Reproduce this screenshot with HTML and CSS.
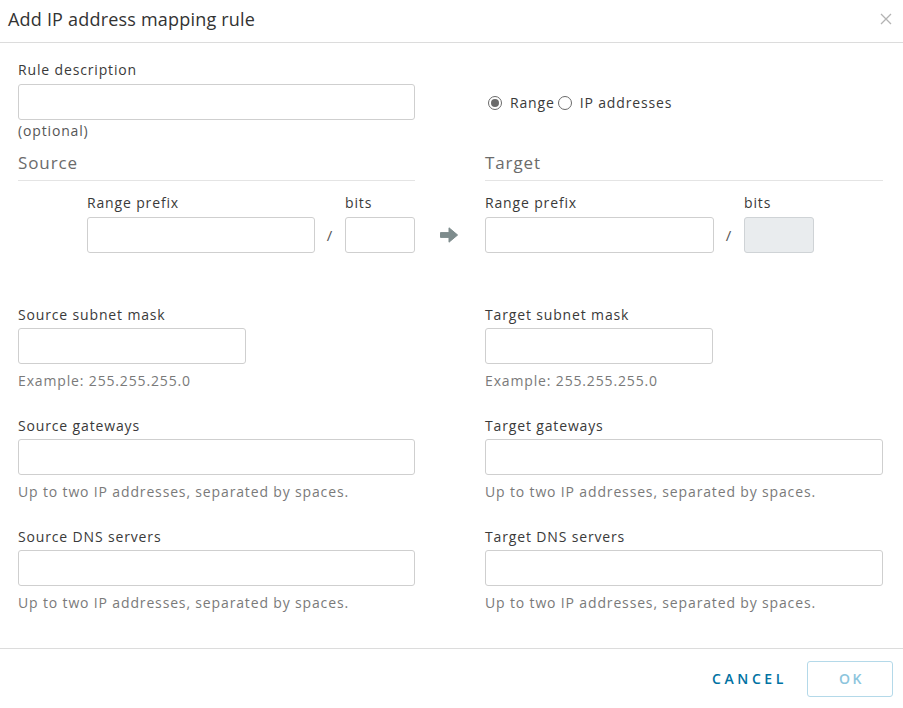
FILE: index.html
```html
<!DOCTYPE html>
<html lang="en">
<head>
<meta charset="utf-8">
<title>Add IP address mapping rule</title>
<link rel="stylesheet" href="styles.css">
</head>
<body>
<div class="modal">
  <div class="modal-header">
    <h3 class="modal-title">Add IP address mapping rule</h3>
    <button class="close" aria-label="Close">
      <svg width="12" height="12" viewBox="0 0 12 12"><path d="M1 1 L11 11 M11 1 L1 11" stroke="#b3b3b3" stroke-width="1.3" fill="none"/></svg>
    </button>
  </div>
  <div class="modal-body">
    <div class="grid">
      <div class="cell-left">
        <label class="label">Rule description</label>
        <input class="input input-full" type="text">
        <div class="optional">(optional)</div>
      </div>
      <div class="cell-mid"></div>
      <div class="cell-right">
        <div class="radios">
          <span class="radio checked"></span><span class="radio-label">Range</span>
          <span class="radio"></span><span class="radio-label gap">IP addresses</span>
        </div>
      </div>

      <div class="cell-left"><h4 class="section">Source</h4></div>
      <div class="cell-mid"></div>
      <div class="cell-right"><h4 class="section">Target</h4></div>

      <div class="cell-left">
        <div class="range range-indent">
          <div class="range-prefix">
            <label class="label">Range prefix</label>
            <input class="input" type="text">
          </div>
          <span class="slash">/</span>
          <div class="range-bits">
            <label class="label">bits</label>
            <input class="input" type="text">
          </div>
        </div>
      </div>
      <div class="cell-mid arrow-cell">
        <svg width="20" height="18" viewBox="0 0 20 18"><path d="M1.5 6.6 H10 V1.8 L18.6 9 L10 16.2 V11.4 H1.5 Z" fill="#7e8c8d" stroke="#7e8c8d" stroke-width="1" stroke-linejoin="round"/></svg>
      </div>
      <div class="cell-right">
        <div class="range">
          <div class="range-prefix wide">
            <label class="label">Range prefix</label>
            <input class="input" type="text">
          </div>
          <span class="slash">/</span>
          <div class="range-bits">
            <label class="label">bits</label>
            <input class="input" type="text" disabled>
          </div>
        </div>
      </div>

      <div class="cell-left group first">
        <label class="label">Source subnet mask</label>
        <input class="input input-half" type="text">
        <div class="helper">Example: 255.255.255.0</div>
      </div>
      <div class="cell-mid"></div>
      <div class="cell-right group first">
        <label class="label">Target subnet mask</label>
        <input class="input input-half" type="text">
        <div class="helper">Example: 255.255.255.0</div>
      </div>

      <div class="cell-left group">
        <label class="label">Source gateways</label>
        <input class="input input-full" type="text">
        <div class="helper">Up to two IP addresses, separated by spaces.</div>
      </div>
      <div class="cell-mid"></div>
      <div class="cell-right group">
        <label class="label">Target gateways</label>
        <input class="input input-full" type="text">
        <div class="helper">Up to two IP addresses, separated by spaces.</div>
      </div>

      <div class="cell-left group">
        <label class="label">Source DNS servers</label>
        <input class="input input-full" type="text">
        <div class="helper">Up to two IP addresses, separated by spaces.</div>
      </div>
      <div class="cell-mid"></div>
      <div class="cell-right group">
        <label class="label">Target DNS servers</label>
        <input class="input input-full" type="text">
        <div class="helper">Up to two IP addresses, separated by spaces.</div>
      </div>
    </div>
  </div>
  <div class="modal-footer">
    <button class="btn btn-link">CANCEL</button>
    <button class="btn btn-outline" disabled>OK</button>
  </div>
</div>
</body>
</html>
```
FILE: styles.css
```css
* { box-sizing: border-box; }
html, body { margin: 0; padding: 0; background: #fff; }
body {
  font-family: "Open Sans", "Liberation Sans", sans-serif;
  color: #313131;
  width: 903px;
  height: 708px;
  overflow: hidden;
  letter-spacing: 0.85px;
}
.modal {
  width: 903px;
  height: 708px;
  display: flex;
  flex-direction: column;
  background: #fff;
}
.modal-header {
  height: 43px;
  border-bottom: 1px solid #dcdcdc;
  display: flex;
  align-items: center;
  justify-content: space-between;
  padding: 0 10px 4px 8px;
}
.modal-title {
  margin: 0;
  font-size: 18px;
  font-weight: 400;
  color: #333;
  letter-spacing: 0.2px;
}
.close {
  border: 0;
  background: none;
  padding: 0;
  width: 14px;
  height: 14px;
  display: flex;
  align-items: center;
  justify-content: center;
}
.modal-body {
  flex: 1;
  padding: 17px 20px 0 18px;
}
.grid {
  display: grid;
  grid-template-columns: 397px 70px 398px;
}
.label {
  display: block;
  font-size: 14px;
  line-height: 20px;
  color: #3a3a3a;
}
.input {
  display: block;
  height: 36px;
  margin-top: 4px;
  border: 1px solid #cfcfcf;
  border-radius: 3px;
  background: #fff;
  font: inherit;
  padding: 0 8px;
  outline: none;
}
.input:disabled { background: #e9ecee; border-color: #cfd3d6; }
.input-full { width: 100%; }
.input-half { width: 228px; }
.optional {
  font-size: 14px;
  line-height: 20px;
  margin-top: 1px;
  color: #565656;
}
.radios {
  display: flex;
  align-items: center;
  margin-top: 33px;
  padding-left: 3px;
  height: 20px;
}
.radio {
  width: 14px;
  height: 14px;
  border: 1px solid #6a6a6a;
  border-radius: 50%;
  position: relative;
  flex: none;
}
.radio.checked::after {
  content: "";
  position: absolute;
  left: 2px;
  top: 2px;
  width: 8px;
  height: 8px;
  border-radius: 50%;
  background: #6a6a6a;
}
.radio-label {
  font-size: 14px;
  line-height: 20px;
  margin-left: 8px;
  margin-right: 3px;
  color: #3a3a3a;
}
.section {
  margin: 9px 0 0 0;
  font-size: 17px;
  font-weight: 400;
  line-height: 26px;
  color: #6b6b6b;
  padding-bottom: 4px;
  border-bottom: 1px solid #e4e4e4;
  letter-spacing: 0.9px;
}
.range {
  display: flex;
  align-items: flex-end;
  margin-top: 12px;
}
.range-indent { padding-left: 69px; }
.range-prefix { width: 228px; }
.range-prefix.wide { width: 229px; }
.range-prefix .input, .range-bits .input { width: 100%; }
.slash {
  width: 30px;
  text-align: center;
  font-size: 15px;
  line-height: 36px;
  color: #565656;
}
.range-bits { width: 70px; }
.arrow-cell {
  display: flex;
  justify-content: center;
  align-items: flex-end;
  padding-bottom: 9px;
  padding-right: 2px;
}
.group { margin-top: 25px; }
.group.first { margin-top: 52px; }
.group .input { margin-top: 3px; }
.helper {
  font-size: 14px;
  line-height: 20px;
  margin-top: 7px;
  color: #7a7a7a;
}
.modal-footer {
  height: 60px;
  border-top: 1px solid #dcdcdc;
  display: flex;
  justify-content: flex-end;
  align-items: center;
  padding: 0 10px 0 0;
  gap: 9px;
}
.btn {
  height: 36px;
  font: inherit;
  font-size: 14px;
  border-radius: 3px;
  cursor: pointer;
  background: #fff;
}
.btn-link {
  border: 1px solid transparent;
  color: #0072a3;
  font-weight: 600;
  letter-spacing: 3.6px;
  padding: 0 10px 0 12px;
}
.btn-outline {
  width: 86px;
  border: 1px solid #b4d9e9;
  color: #8cc5dd;
  font-weight: 600;
  letter-spacing: 2.5px;
  padding: 0 0 0 3px;
}
```
